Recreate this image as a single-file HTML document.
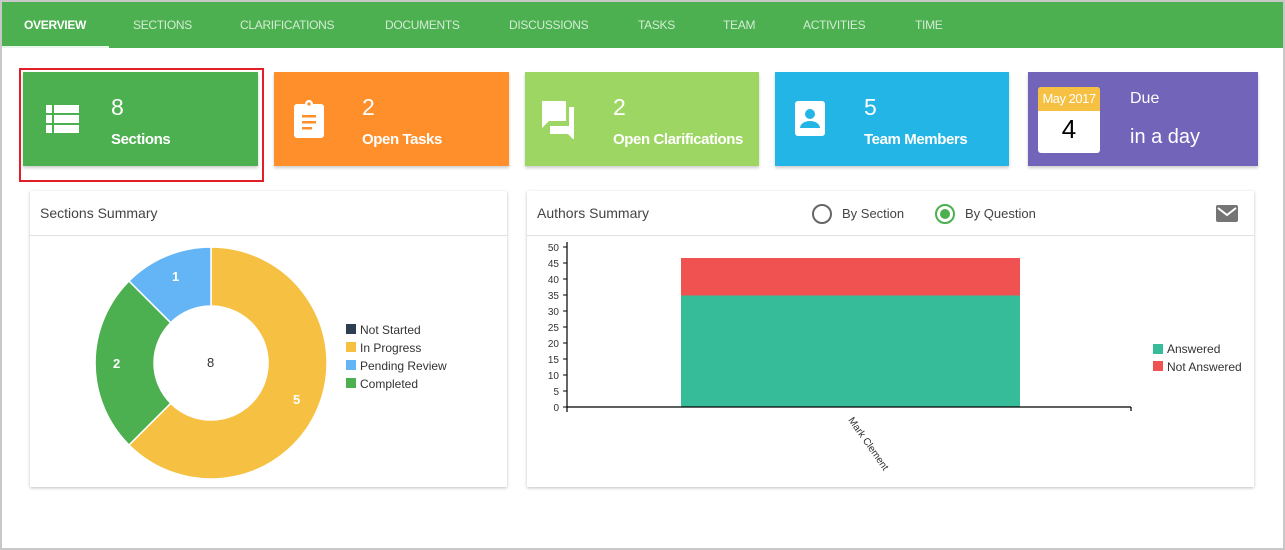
<!DOCTYPE html>
<html><head><meta charset="utf-8"><style>
*{box-sizing:border-box;margin:0;padding:0}
body{width:1285px;height:550px;background:#fff;font-family:"Liberation Sans",sans-serif;position:relative;overflow:hidden}
.frame{position:absolute;left:0;top:0;width:1285px;height:550px;border:2px solid #c8c8c8}
.nav{position:absolute;left:2px;top:2px;width:1281px;height:46px;background:#4caf50}
.nav span{position:absolute;top:16px;font-size:12px;color:#d4ecd5;letter-spacing:-0.3px}
.nav .act{color:#fff;font-weight:bold}
.ul{position:absolute;left:0;top:44px;width:107px;height:2px;background:#e8f5e9}
.card{position:absolute;top:72px;height:94px;color:#fff;box-shadow:0 2px 3px rgba(0,0,0,.2)}
.card .n{position:absolute;top:22px;font-size:23px}
.card .l{position:absolute;top:59px;font-size:15px;font-weight:bold;letter-spacing:-0.4px}
.panel{position:absolute;top:191px;height:296px;background:#fff;box-shadow:0 1px 3px rgba(0,0,0,.25)}
.panel .h{height:45px;border-bottom:1px solid #e0e0e0;font-size:14px;color:#444;padding:14px 0 0 10px}
</style></head><body>
<div class="frame"></div>
<div class="nav">
<span class="act" style="left:22px">OVERVIEW</span>
<span style="left:131px">SECTIONS</span>
<span style="left:238px">CLARIFICATIONS</span>
<span style="left:383px">DOCUMENTS</span>
<span style="left:507px">DISCUSSIONS</span>
<span style="left:636px">TASKS</span>
<span style="left:721px">TEAM</span>
<span style="left:801px">ACTIVITIES</span>
<span style="left:913px">TIME</span>
<div class="ul"></div>
</div>
<div style="position:absolute;left:19px;top:68px;width:245px;height:114px;border:2px solid #e41e26"></div>
<div class="card" style="left:23px;width:235px;background:#4caf50">
<svg style="position:absolute;left:23px;top:33px" width="33" height="28"><g fill="#fff"><rect x="0" y="0" width="6" height="8"/><rect x="8" y="0" width="25" height="8"/><rect x="0" y="10" width="6" height="8"/><rect x="8" y="10" width="25" height="8"/><rect x="0" y="20" width="6" height="8"/><rect x="8" y="20" width="25" height="8"/></g></svg>
<div class="n" style="left:88px">8</div><div class="l" style="left:88px">Sections</div></div>
<div class="card" style="left:274px;width:235px;background:#ff8f2b">
<svg style="position:absolute;left:20px;top:26px" width="30" height="40"><path d="M3 6h8a4 4 0 0 1 8 0h8a3 3 0 0 1 3 3v28a3 3 0 0 1-3 3H3a3 3 0 0 1-3-3V9a3 3 0 0 1 3-3z" fill="#fff"/><circle cx="15" cy="6" r="1.6" fill="#ff8f2b"/><g fill="#ff8f2b"><rect x="8" y="17" width="14" height="2.5"/><rect x="8" y="23" width="14" height="2.5"/><rect x="8" y="29" width="10" height="2.5"/></g></svg>
<div class="n" style="left:88px">2</div><div class="l" style="left:88px">Open Tasks</div></div>
<div class="card" style="left:525px;width:234px;background:#9ed663">
<svg style="position:absolute;left:17px;top:27px" width="34" height="40"><path d="M0 2h24v20H7l-7 7z" fill="#fff"/><path d="M27 8h5v33l-6-6H8v-8h19z" fill="#fff"/></svg>
<div class="n" style="left:88px">2</div><div class="l" style="left:88px">Open Clarifications</div></div>
<div class="card" style="left:775px;width:234px;background:#22b5e5">
<svg style="position:absolute;left:20px;top:29px" width="30" height="36"><rect width="30" height="35" rx="3" fill="#fff"/><circle cx="15" cy="13" r="5" fill="#22b5e5"/><path d="M5 27a10 7 0 0 1 20 0z" fill="#22b5e5"/></svg>
<div class="n" style="left:89px">5</div><div class="l" style="left:89px">Team Members</div></div>
<div class="card" style="left:1028px;width:230px;background:#7264b9">
<div style="position:absolute;left:10px;top:15px;width:62px;height:66px;background:#fff;border-radius:3px;overflow:hidden">
<div style="height:24px;background:#f6c043;font-size:13px;text-align:center;padding-top:4px;color:#fff;letter-spacing:-0.5px">May 2017</div>
<div style="font-size:26px;color:#000;text-align:center;margin-top:3px">4</div></div>
<div style="position:absolute;left:102px;top:18px;font-size:16px">Due</div>
<div style="position:absolute;left:102px;top:54px;font-size:20px">in a day</div></div>

<div class="panel" style="left:30px;width:477px"><div class="h">Sections Summary</div></div>
<svg style="position:absolute;left:0;top:0" width="520" height="500">
<path d="M211 247A116 116 0 1 1 129 445L170.7 403.3A57 57 0 1 0 211 306Z" fill="#f6c143" stroke="#fff" stroke-width="1.5"/>
<path d="M129 445A116 116 0 0 1 129 281L170.7 322.7A57 57 0 0 0 170.7 403.3Z" fill="#4caf50" stroke="#fff" stroke-width="1.5"/>
<path d="M129 281A116 116 0 0 1 211 247L211 306A57 57 0 0 0 170.7 322.7Z" fill="#64b5f6" stroke="#fff" stroke-width="1.5"/>
<g font-family="Liberation Sans" font-size="13" font-weight="bold" fill="#fff"><text x="172" y="281">1</text><text x="113" y="368">2</text><text x="293" y="404">5</text></g>
<text x="207" y="367" font-size="13" font-family="Liberation Sans" fill="#333">8</text>
<g font-family="Liberation Sans" font-size="12" fill="#333">
<rect x="346" y="324" width="10" height="10" fill="#2c3e50"/><text x="360" y="334">Not Started</text>
<rect x="346" y="342" width="10" height="10" fill="#f6c143"/><text x="360" y="352">In Progress</text>
<rect x="346" y="360" width="10" height="10" fill="#64b5f6"/><text x="360" y="370">Pending Review</text>
<rect x="346" y="378" width="10" height="10" fill="#4caf50"/><text x="360" y="388">Completed</text></g>
</svg>

<div class="panel" style="left:527px;width:727px"><div class="h">Authors Summary</div></div>
<div style="position:absolute;left:812px;top:204px;width:20px;height:20px;border:2px solid #666;border-radius:50%"></div>
<div style="position:absolute;left:842px;top:206px;font-size:13px;color:#444">By Section</div>
<div style="position:absolute;left:935px;top:204px;width:20px;height:20px;border:2px solid #4caf50;border-radius:50%"><div style="margin:3px;width:10px;height:10px;border-radius:50%;background:#4caf50"></div></div>
<div style="position:absolute;left:965px;top:206px;font-size:13px;color:#444">By Question</div>
<svg style="position:absolute;left:1216px;top:205px" width="22" height="17"><rect width="22" height="17" rx="2" fill="#757575"/><path d="M2 3l9 7 9-7" stroke="#fff" stroke-width="2" fill="none"/></svg>
<svg style="position:absolute;left:0;top:0" width="1285" height="500">
<rect x="681" y="258" width="339" height="38" fill="#f05252"/>
<rect x="681" y="295.5" width="339" height="111.5" fill="#36bc98"/>
<path d="M567 242V412M567 407H1131M1131 407V411" stroke="#000" stroke-width="1.2" fill="none"/>
<g font-family="Liberation Sans" font-size="10" fill="#333" text-anchor="end">
<text x="559" y="411">0</text><text x="559" y="395">5</text><text x="559" y="379">10</text><text x="559" y="363">15</text><text x="559" y="347">20</text><text x="559" y="331">25</text><text x="559" y="315">30</text><text x="559" y="299">35</text><text x="559" y="283">40</text><text x="559" y="267">45</text><text x="559" y="251">50</text></g>
<path d="M563 407h4M563 391h4M563 375h4M563 359h4M563 343h4M563 327h4M563 311h4M563 295h4M563 279h4M563 263h4M563 247h4" stroke="#000"/>
<text x="848" y="420" font-family="Liberation Sans" font-size="10" fill="#333" transform="rotate(55 848 420)">Mark Clement</text>
<g font-family="Liberation Sans" font-size="12" fill="#333">
<rect x="1153" y="344" width="10" height="10" fill="#36bc98"/><text x="1167" y="353">Answered</text>
<rect x="1153" y="361" width="10" height="10" fill="#f05252"/><text x="1167" y="371">Not Answered</text></g>
</svg>
</body></html>
